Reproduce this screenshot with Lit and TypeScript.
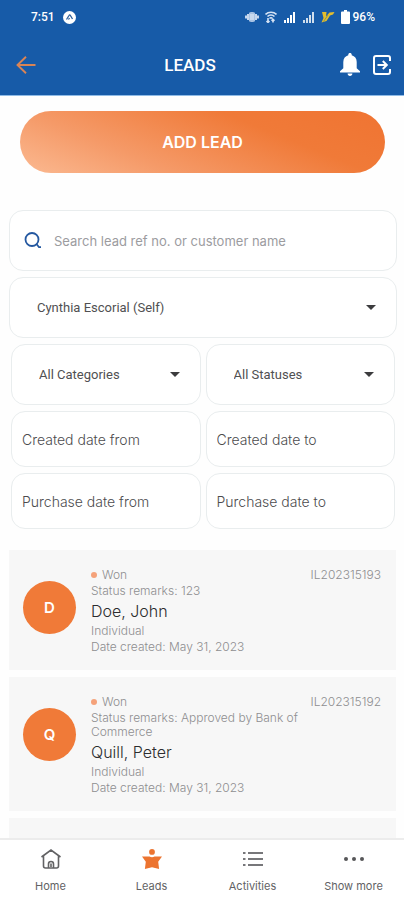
import { LitElement, html, css, svg } from "lit";
import { customElement, property } from "lit/decorators.js";

interface Lead {
  initial: string;
  name: string;
  ref: string;
  remarks: string;
  status: string;
  type: string;
  created: string;
}

const leads: Lead[] = [
  { initial: "D", name: "Doe, John", ref: "IL202315193", remarks: "123", status: "Won", type: "Individual", created: "May 31, 2023" },
  { initial: "Q", name: "Quill, Peter", ref: "IL202315192", remarks: "Approved by Bank of Commerce", status: "Won", type: "Individual", created: "May 31, 2023" },
];

const signal = svg`<path d="M1 9h2v3H1zM4 7h2v5H4zM7 4h2v8H7zM10 1h2v11h-2z" fill="currentColor"/>`;

@customElement("status-bar")
class StatusBar extends LitElement {
  static styles = css`
    :host { display: flex; justify-content: space-between; align-items: center; height: 34px; padding: 0 29px 0 31px; color: #fff; font: 500 12px/16px Roboto, sans-serif; }
    .group { display: flex; align-items: center; gap: 6px; }
    .time { display: flex; align-items: center; gap: 8px; }
    .battery { display: flex; align-items: center; gap: 3px; }
    .dim { opacity: 0.8; }
    svg { display: block; }
  `;
  render() {
    return html`
      <div class="time">
        <span>7:51</span>
        <svg width="13" height="13" viewBox="0 0 13 13"><circle cx="6.500" cy="6.500" r="6.500" fill="#fff" /><path d="M3.500 8.500 6 4.500c.4-.7 1-.7 1.400 0L9.500 8M5.500 8.500l1-1.500" fill="none" stroke="#2d5f9c" stroke-width="1.300" /></svg>
      </div>
      <div class="group">
        <svg width="14" height="12" viewBox="0 0 14 12"><path d="M4 2c1-1.300 5-1.300 6 0v8c-1 1.300-5 1.300-6 0z" fill="#a9c3e4" /><path d="M3 3v6M11 3v6M1 4.500v3M13 4.500v3" stroke="#c6d7ee" stroke-width="2" /><path d="M5 4h4M5 6h4M5 8h4" stroke="#e8f0fa" /></svg>
        <svg width="12" height="12" viewBox="0 0 12 12" fill="none" stroke="#d6e3f4" stroke-width="1.600"><path d="M.5 3.500c3-3 8-3 11 0M2.500 5.500c2-2 5-2 7 0M4.500 7.500c1-1 2-1 3 0M3 7v4.500M1.500 10 3 11.500 4.500 10M8 11.500V8.500M6.500 9.800 8 8.300l1.500 1.500" /></svg>
        <svg width="13" height="13" viewBox="0 0 13 13">${signal}</svg>
        <svg class="dim" width="13" height="13" viewBox="0 0 13 13">${signal}</svg>
        <svg width="14" height="12" viewBox="0 0 14 12"><path d="M1 1h4.500L5 5.500l3.500-4L13.500 1 12 3.500l-3 1L5.500 10l-5 1.500L2.500 7z" fill="#e3bd2e" /><path d="M2.500 10.500 7 4" stroke="#8d9650" /></svg>
        <span class="battery">
          <svg width="9" height="14" viewBox="0 0 9 14"><path d="M3 0h3v1.500h2a1 1 0 0 1 1 1V13a1 1 0 0 1-1 1H1a1 1 0 0 1-1-1V2.500a1 1 0 0 1 1-1h2z" fill="#fff" /></svg>
          <span>96%</span>
        </span>
      </div>
    `;
  }
}

@customElement("lead-card")
class LeadCard extends LitElement {
  @property({ attribute: false }) lead!: Lead;
  static styles = css`
    :host { display: flex; align-items: flex-start; padding: 18px 15px 16px 14px; background: #f7f7f7; color: #8e8e90; font: 300 12px/14px Inter, sans-serif; }
    .avatar { flex: none; display: grid; place-items: center; width: 53px; height: 53px; margin: 13px 15px 0 0; border-radius: 50%; background: #f07a38; color: #fff; font-size: 15px; font-weight: 600; }
    .details { flex: 1; display: grid; gap: 2px; }
    .details > * { margin: 0; }
    .status { display: flex; align-items: center; gap: 5px; }
    .status::before { content: ""; width: 6px; height: 6px; border-radius: 50%; background: #f5a27a; }
    .name { font-size: 16px; line-height: 22px; font-weight: 300; color: #2c2c2e; }
    .ref { flex: none; }
  `;
  render() {
    const l = this.lead;
    return html`
      <div class="avatar">${l.initial}</div>
      <div class="details">
        <p class="status">${l.status}</p>
        <p>Status remarks: ${l.remarks}</p>
        <h2 class="name">${l.name}</h2>
        <p>${l.type}</p>
        <p>Date created: ${l.created}</p>
      </div>
      <span class="ref">${l.ref}</span>
    `;
  }
}

const caret = html`<svg class="caret" width="10" height="5" viewBox="0 0 10 5" aria-hidden="true"><path d="M0 0h10L5 5z" fill="#3c3c3e" /></svg>`;

@customElement("app-root")
class AppRoot extends LitElement {
  static styles = css`
    :host { display: flex; flex-direction: column; height: 100vh; background: #fefefe; color: #3c3c3e; font-family: Inter, sans-serif; }
    * { box-sizing: border-box; }
    svg { display: block; flex: none; }
    button, input, select { font: inherit; color: inherit; border: 0; background: none; padding: 0; margin: 0; }
    .header { flex: none; background: #175ba8; border-bottom: 1px solid #8fbbe6; }
    .bar { display: flex; align-items: center; justify-content: space-between; height: 61px; padding: 0 13px 0 16px; color: #fff; }
    .back { width: 24px; }
    .title { margin: 0; font: 500 17px/24px Roboto, sans-serif; }
    .tools { display: flex; align-items: center; gap: 13px; }
    .main { flex: 1; min-height: 0; overflow-y: auto; scrollbar-width: none; }
    .action { padding: 15px 19px 0 20px; }
    .add { display: block; width: 100%; height: 62px; border-radius: 31px; color: #fff; font-size: 16px; line-height: 20px; font-weight: 600; background: linear-gradient(22deg, #fbb991, #f59a68 30%, #f07a38 68%, #f07432); }
    .filters { display: grid; grid-template-columns: minmax(0, 1fr); gap: 6px; padding: 37px 7px 0 9px; }
    .field { display: flex; align-items: center; min-width: 0; height: 61px; border: 1px solid #e9edee; border-radius: 14px; background: #fff; }
    .field > input, .field > select { flex: 1; width: 100%; min-width: 0; height: 100%; appearance: none; outline: 0; }
    .search { padding: 0 14px; gap: 13px; font-size: 13px; }
    .search input::placeholder { color: #9c9c9f; opacity: 1; }
    .select { padding: 0 20px 0 27px; color: #505052; font: 400 13px/18px Roboto, sans-serif; }
    .pairs { display: grid; grid-template-columns: repeat(2, minmax(0, 1fr)); gap: 6px 5px; padding: 0 2px; }
    .date { height: 56px; padding: 0 10px; font-size: 14px; font-weight: 300; }
    .date input::placeholder { color: #4c4c4e; opacity: 1; }
    .list { display: grid; gap: 7px; padding: 21px 8px 0 9px; }
    .next { height: 120px; background: #f7f7f7; }
    .nav { flex: none; display: grid; grid-template-columns: repeat(4, 1fr); height: 62px; border-top: 2px solid #ececec; background: #fff; }
    .tab { display: flex; flex-direction: column; align-items: center; gap: 9px; padding-top: 9px; color: #626264; font-size: 11px; line-height: 16px; text-decoration: none; }
  `;

  select(label: string) {
    return html`<div class="field select">
      <select aria-label=${label}><option>${label}</option></select>${caret}
    </div>`;
  }

  date(label: string) {
    return html`<div class="field date"><input type="text" aria-label=${label} placeholder=${label} /></div>`;
  }

  render() {
    return html`
      <header class="header">
        <status-bar></status-bar>
        <div class="bar">
          <button class="back" aria-label="Back">
            <svg width="20" height="18" viewBox="0 0 20 18" fill="none" stroke="#d98455" stroke-width="1.900"><path d="M19.500 9H1.500M10 .8 1.500 9l8.500 8.200" /></svg>
          </button>
          <h1 class="title">LEADS</h1>
          <div class="tools">
            <button aria-label="Notifications">
              <svg width="20" height="23" viewBox="0 0 20 23" fill="#fff"><path d="M10 0c1 0 1.700.7 1.700 1.600v.7c3 .8 5 3.200 5 6.600v6.300l3.300 3v1.300H0v-1.300l3.300-3V8.900c0-3.400 2-5.800 5-6.600v-.7C8.300.7 9 0 10 0zM7.600 20.500h4.800c0 1.400-1 2.500-2.400 2.500s-2.400-1.100-2.400-2.500z" /></svg>
            </button>
            <button aria-label="Log out">
              <svg width="18" height="20" viewBox="0 0 18 20" fill="none" stroke="#fff" stroke-width="2"><path d="M17 6V3c0-1.200-.8-2-2-2H3c-1.200 0-2 .8-2 2v14c0 1.200.8 2 2 2h12c1.200 0 2-.8 2-2v-3M4.500 10H13M9.800 6l4 4-4 4" /></svg>
            </button>
          </div>
        </div>
      </header>
      <main class="main">
        <div class="action"><button class="add">ADD LEAD</button></div>
        <form class="filters">
          <div class="field search">
            <svg width="17" height="17" viewBox="0 0 17 17" fill="none" stroke="#2458a0" stroke-width="1.800"><circle cx="8" cy="7.500" r="6.500" /><path d="m12.500 12 2.500 3.200h2" /></svg>
            <input type="search" aria-label="Search leads" placeholder="Search lead ref no. or customer name" />
          </div>
          ${this.select("Cynthia Escorial (Self)")}
          <div class="pairs">
            ${this.select("All Categories")}${this.select("All Statuses")}
            ${this.date("Created date from")}${this.date("Created date to")}
            ${this.date("Purchase date from")}${this.date("Purchase date to")}
          </div>
        </form>
        <section class="list">
          ${leads.map((l) => html`<lead-card .lead=${l}></lead-card>`)}
          <div class="next"></div>
        </section>
      </main>
      <nav class="nav">
        <a class="tab" href="#home">
          <svg width="20" height="20" viewBox="0 0 20 20" fill="none" stroke="#626264" stroke-width="1.600"><path d="M.5 8 10 1l9.500 7M2.500 7v10c0 1.200.7 2 2 2h11c1.300 0 2-.8 2-2V7M7.500 19v-4c0-1.500 1-2.500 2.500-2.500s2.500 1 2.500 2.500v4M10 14.500V18" /></svg>
          Home
        </a>
        <a class="tab" href="#leads" aria-current="page">
          <svg width="20" height="20" viewBox="0 0 20 20" fill="#ec7430"><circle cx="10" cy="2.900" r="2.900" /><path d="M0 7.600h7.500c1.500.7 3.500.7 5 0H20l-3.800 5.200.9 7.200L10 18.200 2.900 20l.9-7.200z" /></svg>
          Leads
        </a>
        <a class="tab" href="#activities">
          <svg width="20" height="20" viewBox="0 0 20 20" stroke="#77777a" stroke-width="2"><path d="M0 4h2.500M5 4h15M0 10h2.500M5 10h15M0 16h2.500M5 16h15" /></svg>
          Activities
        </a>
        <a class="tab" href="#more">
          <svg width="20" height="20" viewBox="0 0 20 20" fill="#565658"><circle cx="2" cy="10" r="2" /><circle cx="10" cy="10" r="2" /><circle cx="18" cy="10" r="2" /></svg>
          Show more
        </a>
      </nav>
    `;
  }
}
